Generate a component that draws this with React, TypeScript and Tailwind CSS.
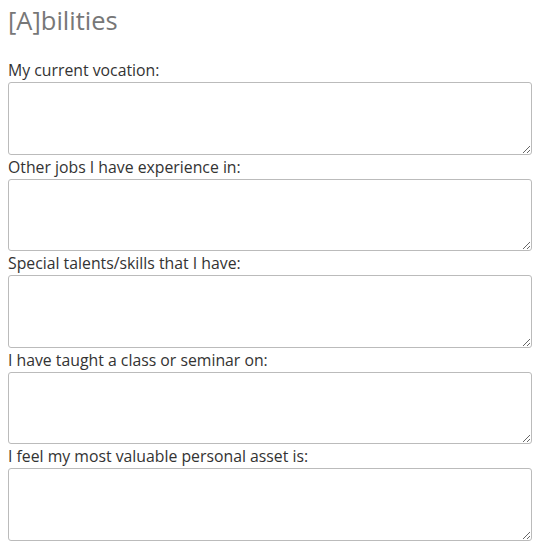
const fields = [
  "My current vocation:",
  "Other jobs I have experience in:",
  "Special talents/skills that I have:",
  "I have taught a class or seminar on:",
  "I feel my most valuable personal asset is:",
];

export default function App() {
  return (
    <div
      className="w-[542px] h-[546px] bg-white pl-2 pr-[10px] overflow-hidden"
      style={{ fontFamily: "'Open Sans', Lato, sans-serif" }}
    >
      <h2 className="text-[25.5px] leading-[40px] text-[#777] font-normal mb-[18px]">[A]bilities</h2>
      {fields.map((label, i) => (
        <div key={i}>
          <label className="block text-[15.8px] leading-[24px] text-[#333]">{label}</label>
          <textarea className="block w-full h-[72.5px] border border-[#bbb] rounded-[3px] bg-white" />
        </div>
      ))}
    </div>
  );
}
